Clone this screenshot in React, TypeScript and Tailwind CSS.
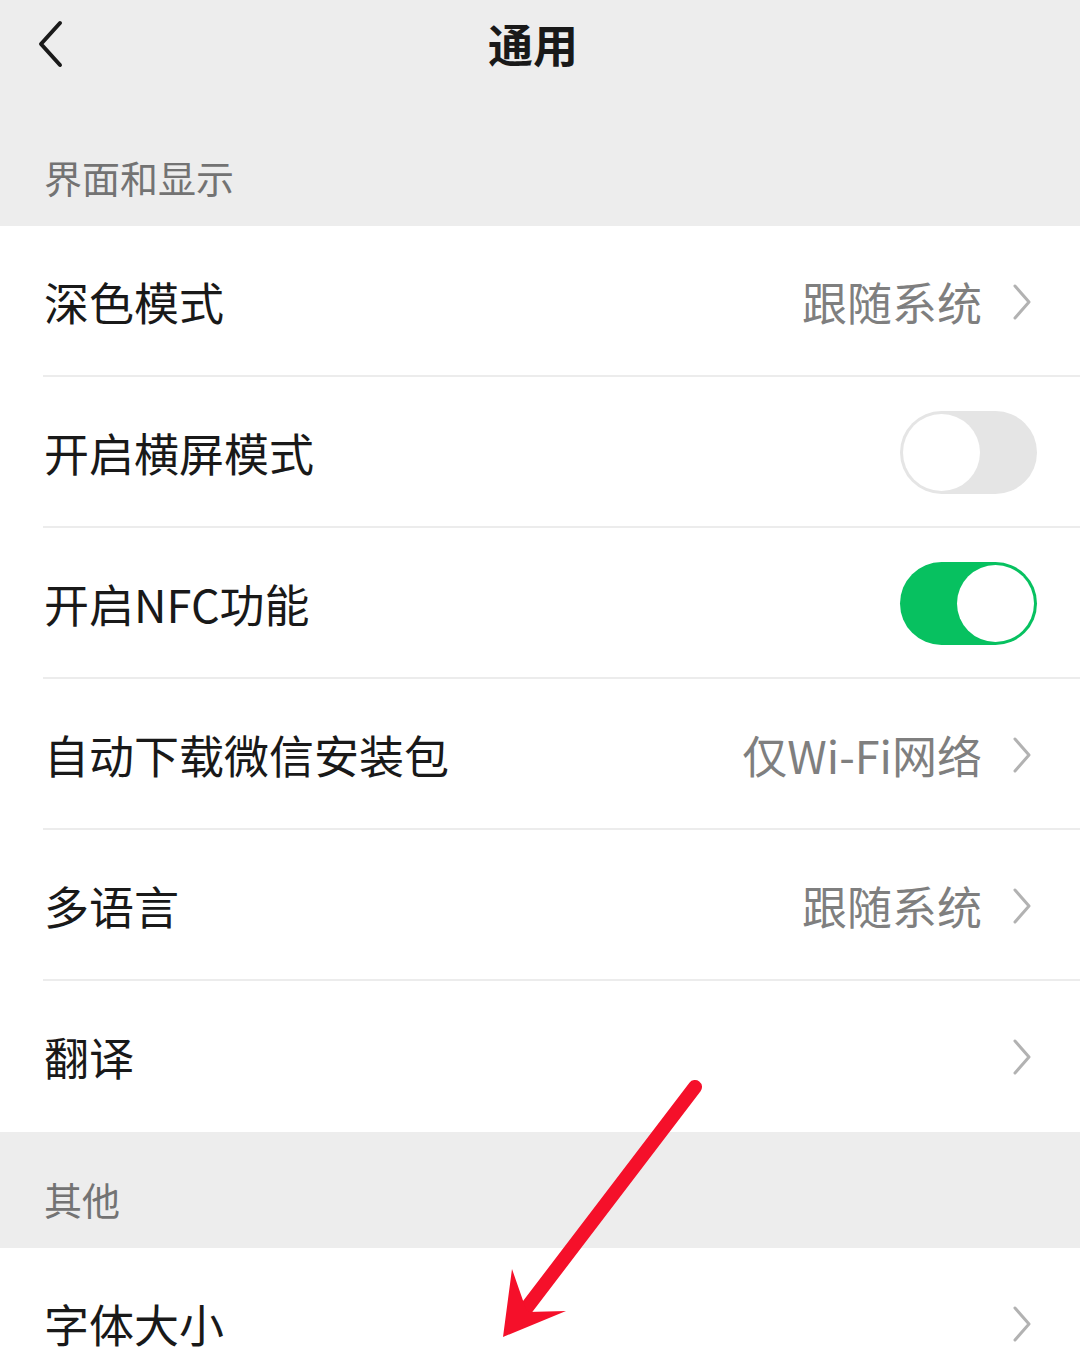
import { ReactNode } from "react"

const font = { fontFamily: '"Noto Sans CJK SC", "Noto Sans", sans-serif' }

function Chevron() {
  return (
    <svg width="20" height="36" viewBox="0 0 20 36" className="shrink-0">
      <path d="M3 2 L17 18 L3 34" fill="none" stroke="#b2b2b2" strokeWidth="3" strokeLinecap="round" strokeLinejoin="round" />
    </svg>
  )
}

function Toggle({ on }: { on: boolean }) {
  return on ? (
    <div className="-mr-[5px] flex h-[83px] w-[137px] items-center justify-end rounded-full bg-[#07c160] px-[3px]">
      <div className="h-[77px] w-[77px] rounded-full bg-white" />
    </div>
  ) : (
    <div className="-mr-[5px] flex h-[83px] w-[137px] items-center rounded-full bg-[#e5e5e5] px-[3px]">
      <div className="h-[77px] w-[77px] rounded-full bg-white" />
    </div>
  )
}

function SectionLabel({ children }: { children: ReactNode }) {
  return (
    <div className="bg-[#ededed] pl-[44px] pt-[48px] pb-[30px] text-[38px] leading-[38px] text-[#737373]">
      {children}
    </div>
  )
}

function Row({ label, value, right, last }: { label: string; value?: string; right?: ReactNode; last?: boolean }) {
  return (
    <div className="relative flex h-[151px] items-center bg-white pl-[44px] pr-[48px]">
      <span className="flex-1 text-[45px] leading-none text-[#191919]">{label}</span>
      {value && <span className="mr-[30px] text-[45px] leading-none text-[#7f7f7f]">{value}</span>}
      {right ?? <Chevron />}
      {!last && <div className="absolute bottom-0 left-[43px] right-0 h-[2px] bg-[#ececec]" />}
    </div>
  )
}

export default function App() {
  return (
    <div className="relative h-[1359px] w-[1080px] overflow-hidden bg-[#ededed]" style={font}>
      {/* nav bar */}
      <div className="relative flex h-[86px] items-center justify-center">
        <svg width="30" height="48" viewBox="0 0 30 48" className="absolute left-[36px] top-[20px]">
          <path d="M24 3 L5 24 L24 45" fill="none" stroke="#1a1a1a" strokeWidth="4" strokeLinecap="round" strokeLinejoin="round" />
        </svg>
        <span className="-ml-[14px] text-[45px] font-bold leading-none text-[#191919]">通用</span>
      </div>

      <div className="h-[24px]" />
      <SectionLabel>界面和显示</SectionLabel>
      <Row label="深色模式" value="跟随系统" />
      <Row label="开启横屏模式" right={<Toggle on={false} />} />
      <Row label="开启NFC功能" right={<Toggle on />} />
      <Row label="自动下载微信安装包" value="仅Wi-Fi网络" />
      <Row label="多语言" value="跟随系统" />
      <Row label="翻译" last />

      <SectionLabel>其他</SectionLabel>
      <Row label="字体大小" last />

      {/* red pointer arrow */}
      <svg className="pointer-events-none absolute inset-0" width="1080" height="1359" viewBox="0 0 1080 1359">
        <line x1="695" y1="1087" x2="525" y2="1310" stroke="#f5102a" strokeWidth="14" strokeLinecap="round" />
        <path d="M503 1337 L512 1269 L527 1312 L566 1311 Z" fill="#f5102a" />
      </svg>
    </div>
  )
}
